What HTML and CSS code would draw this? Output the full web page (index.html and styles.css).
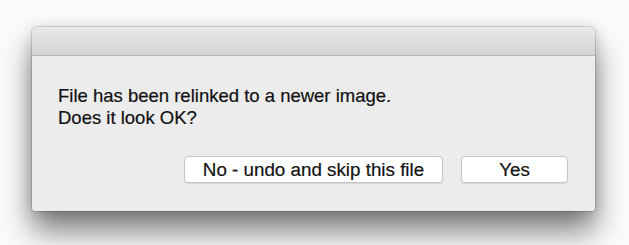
FILE: index.html
```html
<!DOCTYPE html>
<html lang="en">
<head>
  <meta charset="UTF-8">
  <title>Relink</title>
  <link rel="stylesheet" href="styles.css">
</head>
<body>
  <div class="dialog">
    <div class="titlebar"></div>
    <div class="content">
      <p class="message">
        File has been relinked to a newer image.<br>
        Does it look OK?
      </p>
      <div class="buttons">
        <button class="btn btn-no">No - undo and skip this file</button>
        <button class="btn btn-yes">Yes</button>
      </div>
    </div>
  </div>
</body>
</html>
```

FILE: styles.css
```css
body {
  margin: 0;
  background: #fbfbfb;
  font-family: "Liberation Sans", Arial, sans-serif;
  color: #111;
  height: 245px;
  overflow: hidden;
}
.dialog {
  margin: 27px 0 0 32px;
  width: 563px;
  height: 184px;
  background: #ececec;
  border-radius: 5px 5px 3px 3px;
  box-shadow: 0 0 0 1px rgba(0,0,0,0.12), 0 20px 30px rgba(0,0,0,0.5), 0 2px 14px rgba(0,0,0,0.16);
  overflow: hidden;
}
.titlebar {
  height: 28px;
  background: linear-gradient(#e9e9e9, #d5d5d5);
  border-bottom: 1px solid #b3b3b3;
}
.content {
  padding: 29px 27px 0 26px;
}
.message {
  margin: 0;
  font-size: 18.5px;
  line-height: 21.5px;
  -webkit-text-stroke: 0.2px #111;
}
.buttons {
  display: flex;
  justify-content: flex-end;
  gap: 18px;
  margin-top: 28px;
}
.btn {
  height: 27px;
  background: #fff;
  border: 1px solid #c6c6c6;
  border-radius: 4px;
  box-shadow: 0 1px 1px rgba(0,0,0,0.1);
  font-family: "Liberation Sans", Arial, sans-serif;
  font-size: 18.8px;
  color: #111;
  -webkit-text-stroke: 0.2px #111;
  padding: 0;
}
.btn-no {
  width: 259px;
}
.btn-yes {
  width: 107px;
}
```
